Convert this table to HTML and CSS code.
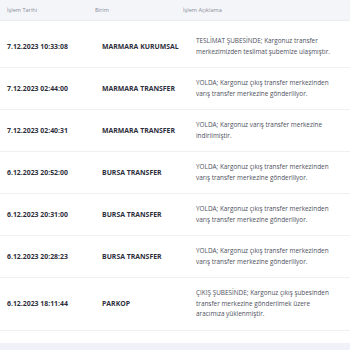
FILE: index.html
```html
<!DOCTYPE html>
<html lang="tr">
<head>
<meta charset="utf-8">
<link rel="stylesheet" href="styles.css">
</head>
<body>
<div class="page">
  <div class="table">
    <div class="head">
      <div class="h h-date">İşlem Tarihi</div>
      <div class="h h-unit">Birim</div>
      <div class="h h-desc">İşlem Açıklama</div>
    </div>
    <div class="row first">
      <div class="date">7.12.2023 10:33:08</div>
      <div class="unit">MARMARA KURUMSAL</div>
      <div class="desc">TESLİMAT ŞUBESİNDE; Kargonuz transfer merkezimizden teslimat şubemize ulaşmıştır.</div>
    </div>
    <div class="row">
      <div class="date">7.12.2023 02:44:00</div>
      <div class="unit">MARMARA TRANSFER</div>
      <div class="desc">YOLDA; Kargonuz çıkış transfer merkezinden varış transfer merkezine gönderiliyor.</div>
    </div>
    <div class="row">
      <div class="date">7.12.2023 02:40:31</div>
      <div class="unit">MARMARA TRANSFER</div>
      <div class="desc">YOLDA; Kargonuz varış transfer merkezine indirilmiştir.</div>
    </div>
    <div class="row">
      <div class="date">6.12.2023 20:52:00</div>
      <div class="unit">BURSA TRANSFER</div>
      <div class="desc">YOLDA; Kargonuz çıkış transfer merkezinden varış transfer merkezine gönderiliyor.</div>
    </div>
    <div class="row">
      <div class="date">6.12.2023 20:31:00</div>
      <div class="unit">BURSA TRANSFER</div>
      <div class="desc">YOLDA; Kargonuz çıkış transfer merkezinden varış transfer merkezine gönderiliyor.</div>
    </div>
    <div class="row">
      <div class="date">6.12.2023 20:28:23</div>
      <div class="unit">BURSA TRANSFER</div>
      <div class="desc">YOLDA; Kargonuz çıkış transfer merkezinden varış transfer merkezine gönderiliyor.</div>
    </div>
    <div class="row">
      <div class="date">6.12.2023 18:11:44</div>
      <div class="unit">PARKOP</div>
      <div class="desc">ÇIKIŞ ŞUBESİNDE; Kargonuz çıkış şubesinden transfer merkezine gönderilmek üzere aracımıza yüklenmiştir.</div>
    </div>
  </div>
  <div class="footer"></div>
</div>
</body>
</html>
```
FILE: styles.css
```css
* { box-sizing: border-box; }
html, body { margin: 0; padding: 0; background: #ffffff; }
body { font-family: "Open Sans", "Liberation Sans", sans-serif; color: #2b2b3a; }
.page { width: 350px; height: 350px; overflow: hidden; display: flex; flex-direction: column; }
.table { background: #fff; }
.head {
  height: 21px;
  background: #f4f5f9;
  border-bottom: 1px solid #ebedf2;
  display: grid;
  grid-template-columns: 87px 88px 1fr;
  align-items: center;
  font-size: 5.6px;
  color: #8a8d99;
}
.h-date { padding-left: 7px; }
.h-unit { padding-left: 8px; }
.h-desc { padding-left: 8px; }
.row {
  display: grid;
  grid-template-columns: 94px 94px 1fr;
  align-items: center;
  min-height: 42px;
  padding: 10px 0;
  border-bottom: 1px solid #eef0f4;
}
.row.first { min-height: 47px; padding-top: 15px; }
.date { padding-left: 7px; font-size: 6.9px; font-weight: 700; color: #2d2e3b; }
.unit { padding-left: 8px; font-size: 6.9px; font-weight: 700; color: #2d2e3b; }
.desc { padding-left: 8px; padding-right: 12px; font-size: 6.4px; line-height: 10.5px; color: #4d4f5c; }
.footer { margin-top: 12px; flex: 1; background: #f1f1fa; }
```
